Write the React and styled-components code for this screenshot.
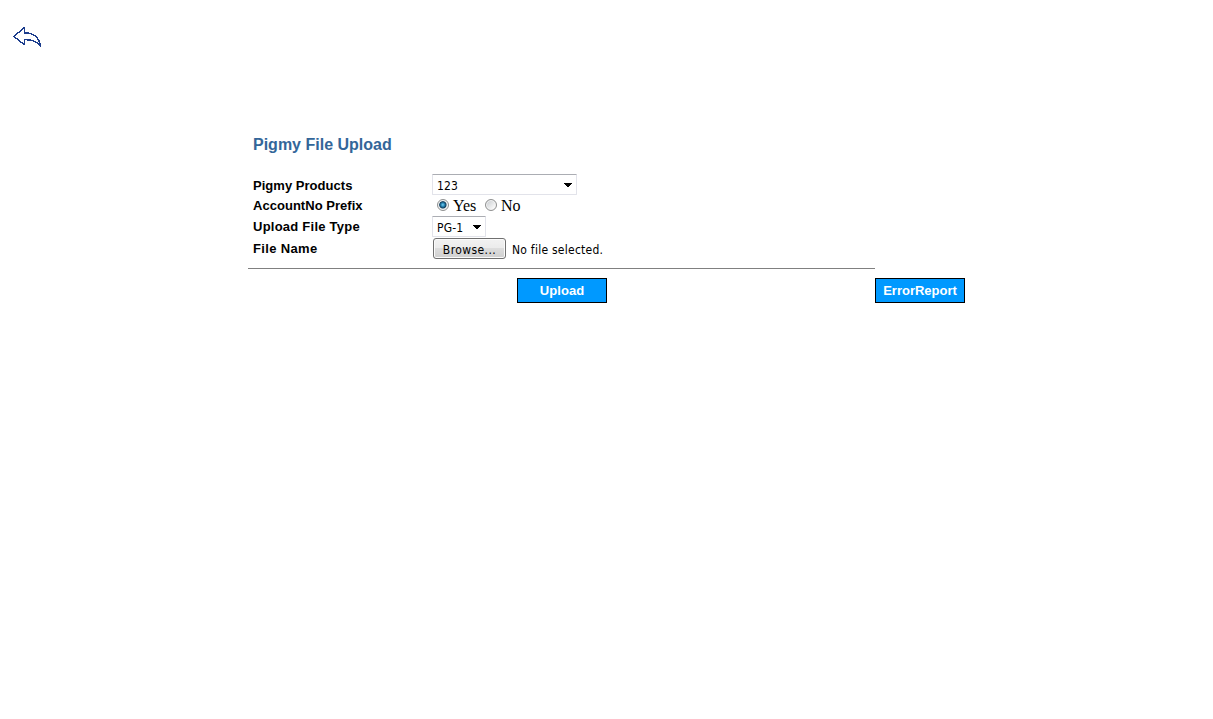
import React from "react";
import styled, { createGlobalStyle } from "styled-components";

const GlobalStyle = createGlobalStyle`
  * { box-sizing: border-box; }
  body { margin: 0; background: #fff; color: #000; }
`;

const controlFont = `"DejaVu Sans Condensed", "DejaVu Sans", sans-serif`;

const Page = styled.main`
  width: 1213px;
  height: 719px;
  overflow: hidden;
  font-family: "Liberation Sans", Arial, sans-serif;
`;

const Header = styled.header`
  height: 134px;
  padding: 25px 0 0 11px;
`;

const BackLink = styled.a`
  display: block;
  width: 32px;
  height: 24px;
  svg { display: block; }
`;

const Form = styled.form`
  width: 717px;
  margin-left: 248px;
`;

const Title = styled.h1`
  margin: 0;
  padding: 1px 0 0 5px;
  height: 40px;
  font-size: 16px;
  line-height: 20px;
  font-weight: bold;
  color: #336699;
  white-space: nowrap;
`;

const Row = styled.div`
  display: grid;
  grid-template-columns: 179px 1fr;
  height: ${(p) => p.$height}px;
  padding-left: 5px;
`;

const Label = styled.label`
  font-size: 13px;
  line-height: 20px;
  font-weight: bold;
  letter-spacing: ${(p) => p.$spacing};
  padding-top: ${(p) => p.$top || 0}px;
  white-space: nowrap;
`;

const Select = styled.div`
  display: flex;
  align-items: center;
  justify-content: space-between;
  width: ${(p) => p.$width}px;
  height: 21px;
  padding: 1px 4px 0 4px;
  border: 1px solid #e2e3ea;
  border-top-color: #abadb3;
  border-radius: 1px;
  font: 12px/18px ${controlFont};
  letter-spacing: ${(p) => p.$spacing};
  svg { display: block; margin-top: -1px; }
`;

const SelectText = styled.span`
  padding-top: 1px;
`;

const RadioGroup = styled.div`
  display: flex;
  padding-left: 5px;
`;

const RadioOption = styled.span`
  display: flex;
  width: 48px;
  font: 16px/21px "Liberation Serif", "Times New Roman", serif;
`;

const RadioText = styled.span`
  margin-left: 4px;
`;

const Radio = styled.i`
  width: 12px;
  height: 12px;
  margin-top: 4px;
  border: 1px solid #8e8f8f;
  border-radius: 50%;
  background: ${(p) =>
    p.$checked
      ? "radial-gradient(circle at 48% 48%, #7fd0f0 0, #2b8dbd 1.6px, #12405f 3.2px, #d5dde2 4.2px, #f4f4f4 5px)"
      : "linear-gradient(135deg, #c4c8cc, #f6f6f6 75%)"};
  box-shadow: inset 0 0 0 1px #f4f4f4;
`;

const FileField = styled.div`
  display: flex;
  padding: 1px 0 0 1px;
  font: 12px/21px ${controlFont};
`;

const BrowseButton = styled.button`
  width: 73px;
  height: 21px;
  padding: 3px 0 0;
  border: 1px solid #707070;
  border-radius: 3px;
  background: linear-gradient(#f2f2f2 0, #ebebeb 50%, #dddddd 50%, #cfcfcf 100%);
  box-shadow: inset 0 0 0 1px #fbfbfb;
  color: #000;
  font: 12px/16px ${controlFont};
  letter-spacing: 0.42px;
`;

const FileStatus = styled.span`
  margin-left: 6px;
  padding-top: 2px;
  line-height: 20px;
  letter-spacing: 0.25px;
  white-space: nowrap;
`;

const Divider = styled.div`
  width: 627px;
  height: 1px;
  margin-top: 8px;
  background: #808080;
`;

const Actions = styled.div`
  display: flex;
  justify-content: space-between;
  padding: 9px 0 0 269px;
`;

const ActionButton = styled.button`
  width: 90px;
  height: 25px;
  padding: 0;
  border: 1px solid #000;
  border-radius: 0;
  background: #0099ff;
  color: #fff;
  font: bold 13px/23px "Liberation Sans", Arial, sans-serif;
  letter-spacing: ${(p) => p.$spacing};
`;

const Caret = () => (
  <svg width="8" height="4" viewBox="0 0 8 4" shapeRendering="crispEdges">
    <path d="M0 0h8v1h-1v1h-1v1h-1v1h-2v-1h-1v-1h-1v-1h-1z" />
  </svg>
);

export default function App() {
  return (
    <Page>
      <GlobalStyle />
      <Header>
        <BackLink aria-label="Back">
          <svg width="32" height="24" viewBox="0 0 32 24" fill="none" stroke="#1b3c8c" strokeWidth="1.4" strokeLinejoin="round" shapeRendering="crispEdges">
            <path d="M2.8 11.5 13.5 2.5V7.8C22 7.8 28 12 29.5 21.2C26 16 20 14.6 13.5 14.6V19.8Z" />
          </svg>
        </BackLink>
      </Header>
      <Form>
        <Title>Pigmy File Upload</Title>
        <Row $height={21}>
          <Label $top={2} $spacing="0.03px">Pigmy Products</Label>
          <Select $width={145} $spacing="0.1px"><SelectText>123</SelectText><Caret /></Select>
        </Row>
        <Row $height={21}>
          <Label $top={1} $spacing="0.03px">AccountNo Prefix</Label>
          <RadioGroup>
            <RadioOption><Radio $checked /><RadioText>Yes</RadioText></RadioOption>
            <RadioOption><Radio /><RadioText>No</RadioText></RadioOption>
          </RadioGroup>
        </Row>
        <Row $height={21}>
          <Label $top={1} $spacing="0.24px">Upload File Type</Label>
          <Select $width={54} $spacing="0.2px"><SelectText>PG-1</SelectText><Caret /></Select>
        </Row>
        <Row $height={23}>
          <Label $top={2} $spacing="0.35px">File Name</Label>
          <FileField>
            <BrowseButton type="button">Browse...</BrowseButton>
            <FileStatus>No file selected.</FileStatus>
          </FileField>
        </Row>
        <Divider />
        <Actions>
          <ActionButton type="button" $spacing="0.1px">Upload</ActionButton>
          <ActionButton type="button" $spacing="0">ErrorReport</ActionButton>
        </Actions>
      </Form>
    </Page>
  );
}
